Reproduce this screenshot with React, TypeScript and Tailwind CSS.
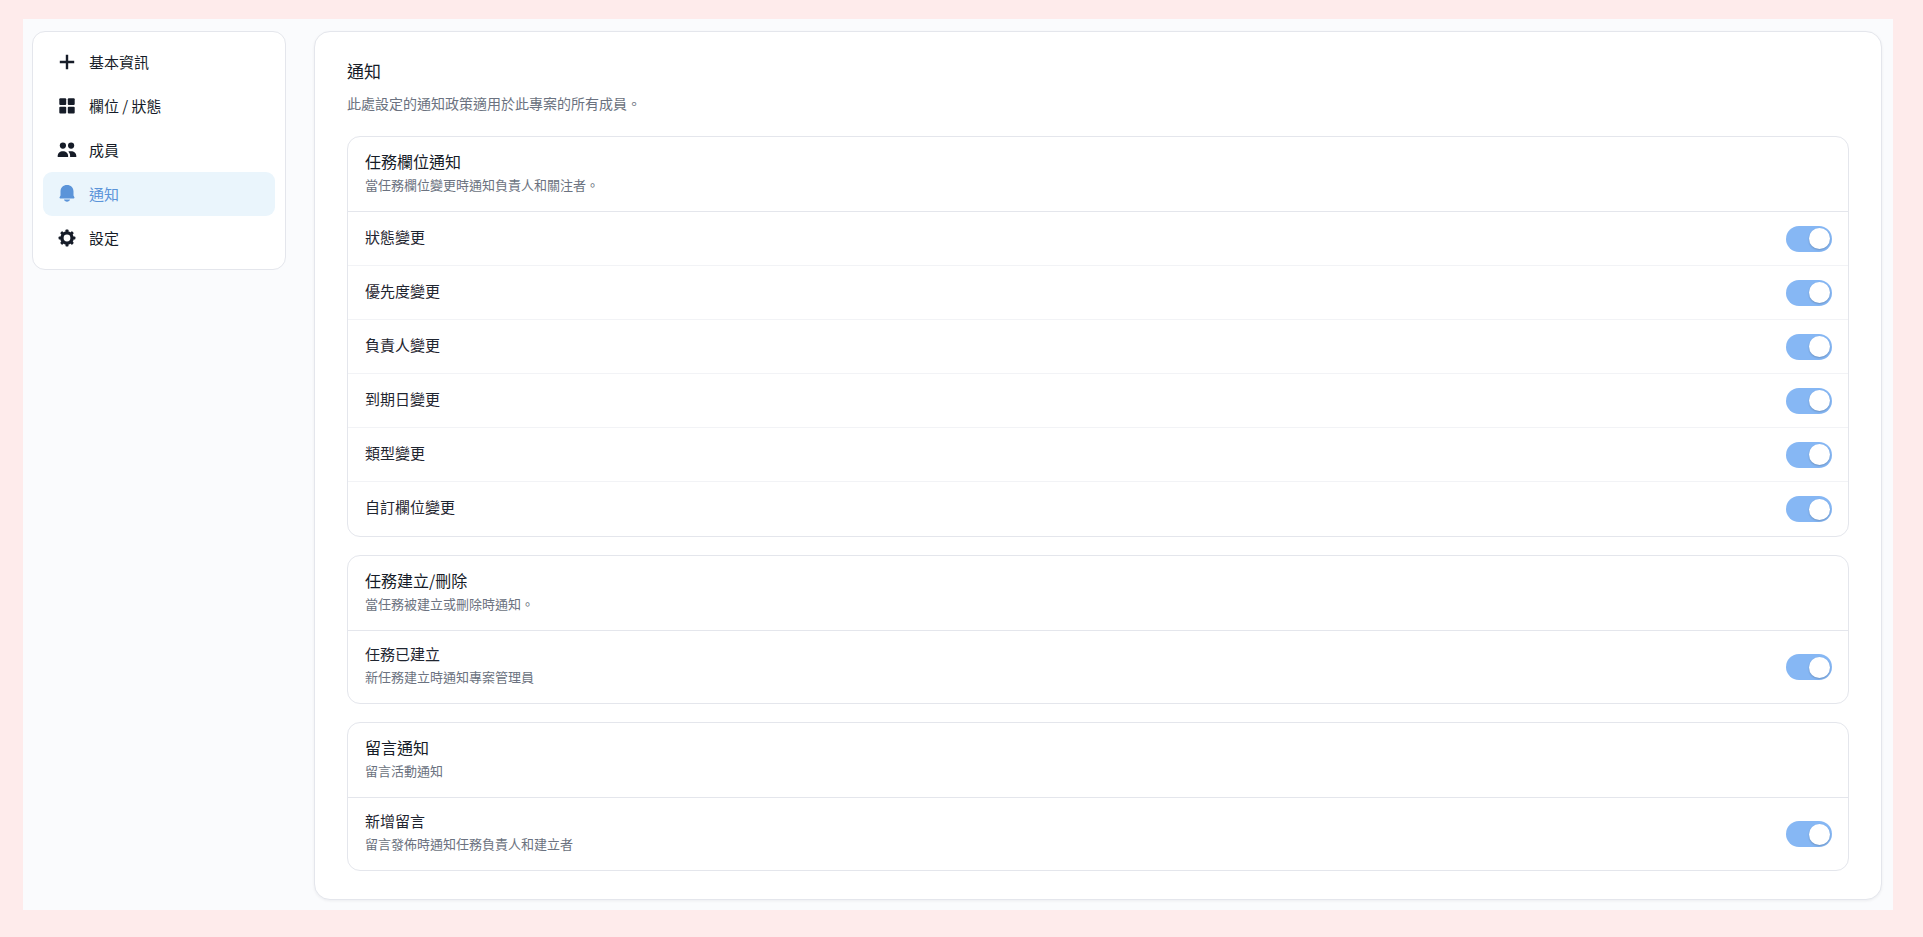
import type { ReactNode } from 'react'
import clsx from 'clsx'

interface NavItem {
  label: string
  icon: ReactNode
  active?: boolean
}

interface Setting {
  id: string
  label: string
  description?: string
}

interface SettingGroup {
  title: string
  description: string
  settings: Setting[]
}

const GEAR_TEETH = [0, 45, 90, 135, 180, 225, 270, 315]

const navItems: NavItem[] = [
  {
    label: '基本資訊',
    icon: <path d="M10 2.8v14.4M2.8 10h14.4" fill="none" stroke="currentColor" strokeWidth="2.4" />,
  },
  {
    label: '欄位 / 狀態',
    icon: (
      <>
        <rect x="2.3" y="2.2" width="6.9" height="6.9" rx="1" />
        <rect x="10.8" y="2.2" width="6.9" height="6.9" rx="1" />
        <rect x="2.3" y="10.7" width="6.9" height="6.9" rx="1" />
        <rect x="10.8" y="10.7" width="6.9" height="6.9" rx="1" />
      </>
    ),
  },
  {
    label: '成員',
    icon: (
      <>
        <circle cx="5.9" cy="5.6" r="3.1" />
        <circle cx="14.1" cy="5.6" r="3.1" />
        <path d="M.7 17v-1.200c0-2.700 2.200-4.600 5.200-4.600s5.200 1.900 5.200 4.600V17z" />
        <path d="M11.300 11.500c.8-.2 1.700-.3 2.600-.3 3.200 0 5.400 1.900 5.400 4.600V17h-6.200v-1.200c0-1.700-.6-3.200-1.800-4.300z" />
      </>
    ),
  },
  {
    label: '通知',
    active: true,
    icon: (
      <>
        <path d="M10 1C6.200 1 3.500 3.700 3.500 7.400v4l-.9 1.900c-.3.600.1 1.200.7 1.200h13.400c.6 0 1-.6.7-1.200l-.9-1.900v-4C16.500 3.700 13.800 1 10 1z" />
        <path d="M7 15.600h6c-.3 1.300-1.500 2.200-3 2.200s-2.700-.9-3-2.200z" />
      </>
    ),
  },
  {
    label: '設定',
    icon: (
      <>
        <circle cx="10" cy="10" r="5.100" fill="none" stroke="currentColor" strokeWidth="3.400" />
        {GEAR_TEETH.map((angle) => (
          <rect key={angle} x="8.500" y="1.600" width="3" height="3" rx=".7" transform={`rotate(${angle} 10 10)`} />
        ))}
      </>
    ),
  },
]

const groups: SettingGroup[] = [
  {
    title: '任務欄位通知',
    description: '當任務欄位變更時通知負責人和關注者。',
    settings: [
      { id: 'status', label: '狀態變更' },
      { id: 'priority', label: '優先度變更' },
      { id: 'assignee', label: '負責人變更' },
      { id: 'due-date', label: '到期日變更' },
      { id: 'type', label: '類型變更' },
      { id: 'custom-field', label: '自訂欄位變更' },
    ],
  },
  {
    title: '任務建立/刪除',
    description: '當任務被建立或刪除時通知。',
    settings: [{ id: 'task-created', label: '任務已建立', description: '新任務建立時通知專案管理員' }],
  },
  {
    title: '留言通知',
    description: '留言活動通知',
    settings: [{ id: 'comment-added', label: '新增留言', description: '留言發佈時通知任務負責人和建立者' }],
  },
]

function Sidebar() {
  return (
    <nav className="w-[254px] shrink-0 self-start rounded-[13px] border border-[#e4e6ec] bg-white px-[10px] pt-2 pb-[9px]">
      <ul>
        {navItems.map((item) => (
          <li key={item.label}>
            <a
              href="#"
              aria-current={item.active ? 'page' : undefined}
              className={clsx(
                'flex h-11 items-center gap-3 rounded-[9px] px-[14px] text-[15px]',
                item.active ? 'bg-[#eaf5fc] text-[#5b94d9]' : 'text-[#161c28]'
              )}
            >
              <svg viewBox="0 0 20 20" className="size-5 shrink-0 fill-current" aria-hidden="true">
                {item.icon}
              </svg>
              {item.label}
            </a>
          </li>
        ))}
      </ul>
    </nav>
  )
}

function SettingRow({ setting }: { setting: Setting }) {
  return (
    <div
      className={clsx(
        'flex items-center justify-between border-b border-[#f2f3f6] pr-4 pl-[17px] last:border-b-0',
        setting.description ? 'h-[72px]' : 'h-[54px]'
      )}
    >
      <div className="pb-1">
        <label htmlFor={setting.id} className="block text-[15px] leading-6 text-[#1f2530]">
          {setting.label}
        </label>
        {setting.description && (
          <p id={`${setting.id}-hint`} className="text-[13px] leading-[22px] text-[#6b7280]">
            {setting.description}
          </p>
        )}
      </div>
      <input
        id={setting.id}
        type="checkbox"
        role="switch"
        defaultChecked
        aria-describedby={setting.description ? `${setting.id}-hint` : undefined}
        className="flex h-[26px] w-[46px] shrink-0 cursor-pointer appearance-none items-center rounded-full bg-gray-300 px-[2px] before:size-[21px] before:rounded-full before:bg-white before:shadow-[0_1px_2px_rgba(0,0,0,0.2)] checked:justify-end checked:bg-[#86b7f4]"
      />
    </div>
  )
}

function SettingCard({ group }: { group: SettingGroup }) {
  return (
    <section className="rounded-[13px] border border-[#e4e6ec]">
      <div className="flex h-[75px] flex-col justify-center border-b border-[#e4e6ec] pr-4 pb-[2px] pl-[17px]">
        <h2 className="text-base leading-6 text-[#161c28]">{group.title}</h2>
        <p className="text-[13px] leading-6 text-[#6b7280]">{group.description}</p>
      </div>
      {group.settings.map((setting) => (
        <SettingRow key={setting.id} setting={setting} />
      ))}
    </section>
  )
}

export default function App() {
  return (
    <div
      lang="zh-Hant"
      className="flex min-h-screen bg-[#feebeb] pt-[19px] pr-[30px] pb-[27px] pl-[23px] font-['Noto_Sans_CJK_TC',sans-serif]"
    >
      <div className="flex flex-1 gap-7 bg-[#fafbfd] pt-3 pr-[11px] pb-[10px] pl-[9px]">
        <Sidebar />
        <main className="flex-1 rounded-2xl border border-[#e4e6ec] bg-white px-8 py-[27px] shadow-[0_1px_3px_rgba(15,23,42,0.06)]">
          <h1 className="text-[17px] leading-6 text-[#161c28]">通知</h1>
          <p className="mt-2 text-sm leading-6 text-[#6b7280]">此處設定的通知政策適用於此專案的所有成員。</p>
          <div className="mt-[21px] flex flex-col gap-[18px]">
            {groups.map((group) => (
              <SettingCard key={group.title} group={group} />
            ))}
          </div>
        </main>
      </div>
    </div>
  )
}
